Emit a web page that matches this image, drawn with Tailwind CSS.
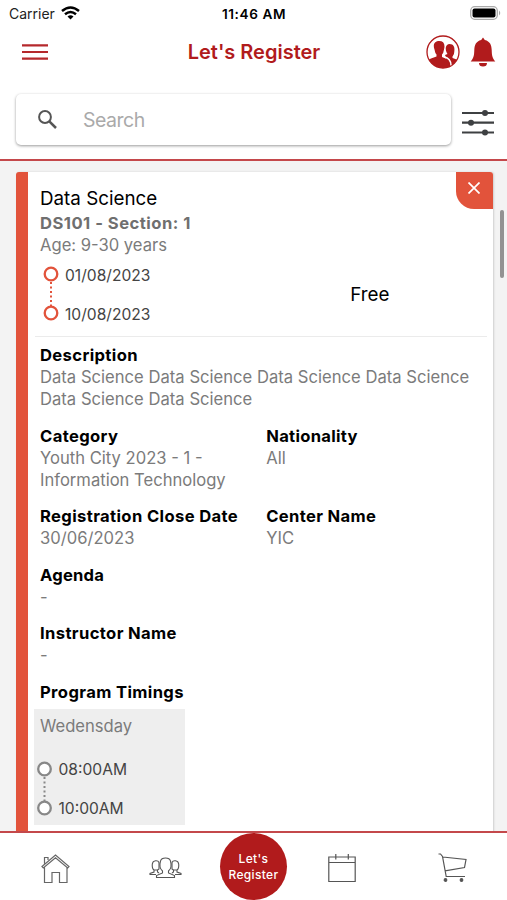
<!DOCTYPE html>
<html lang="en">
<head>
<meta charset="utf-8">
<title>Let's Register</title>
<script src="https://cdn.jsdelivr.net/npm/@tailwindcss/browser@4"></script>
</head>
<body class="w-[507px] h-[900px] overflow-hidden bg-white text-black font-['Inter','Liberation_Sans',sans-serif] text-[16.6px] leading-[22px] flex flex-col">
  <header class="h-[161px] shrink-0 border-b-2 border-[#c4484b] flex flex-col">
    <!-- Status bar -->
    <div class="h-7 grid grid-cols-3 items-center pl-[9px] pr-[6px] text-[14px]">
      <div class="flex items-center gap-[6px]">
        <span class="text-[#222]">Carrier</span>
        <svg width="19" height="14" viewBox="0 0 19 14" fill="none" stroke="#000" stroke-width="2.500" class="-mt-[2px]"><path d="M1 5Q9.500-2 18 5"/><path d="M4 8.300Q9.500 3.800 15 8.300"/><path d="M6.500 10.600Q9.500 8 12.500 10.600L9.500 13.600Z" fill="#000" stroke="none"/></svg>
      </div>
      <div class="text-center font-semibold text-[13.600px] tracking-[0.6px] whitespace-nowrap -ml-[2px]">11:46 AM</div>
      <svg class="justify-self-end -mt-[2px]" width="31" height="14" viewBox="0 0 31 14"><rect x=".7" y=".7" width="26.600" height="12.600" rx="4" fill="#fff" stroke="#aaa" stroke-width="1.300"/><rect x="2.500" y="2.500" width="23" height="9" rx="2" fill="#000"/><path d="M29 4.500Q31.500 7 29 9.500Z" fill="#aaa"/></svg>
    </div>
    <!-- Title bar -->
    <div class="h-[48px] grid grid-cols-[1fr_auto_1fr] items-center pl-[22px] pr-[11px] text-[#b11b1c]">
      <svg width="26" height="16" viewBox="0 0 26 16" stroke="#b5292c" stroke-width="2.200"><path d="M0 1.300H26M0 8H26M0 14.700H26"/></svg>
      <h1 class="text-[20px] font-semibold leading-6 -ml-[10px]">Let's Register</h1>
      <div class="flex items-center justify-self-end gap-[10px]">
        <svg width="34" height="34" viewBox="0 0 34 34"><defs><clipPath id="ring"><circle cx="17" cy="17" r="16"/></clipPath></defs><circle cx="17" cy="17" r="16" fill="#fff" stroke="#b11b1c" stroke-width="1.300"/><g clip-path="url(#ring)" fill="#b11b1c"><path d="M23.500 9C27.800 9 29 12.500 28.300 16.500Q28.500 19.500 26.500 21.500V23L32 25V31L24 33L19 20L21.500 19C18.500 14.500 19.500 9 23.500 9Z"/><path d="M8.500 14.500C6.500 9 9 6 13.200 6C17.500 6 19.500 9 18 14.500Q17.500 18 16 19.500V22L19.500 23.500Q24.500 25 25.500 29V35H0V26L5 23.500L10.500 21.500V19.500Q9 18 8.500 14.500Z"/><path d="M18 21.800Q25 23.500 25 30.500" fill="none" stroke="#fff" stroke-width="1.500"/></g></svg>
        <svg width="26" height="30" viewBox="0 0 26 30" fill="#b11b1c"><path d="M13 .5L14.800 3C20 4.300 21.500 8 21.700 13C21.900 18.500 22.300 21 25.300 24.500H.7C3.700 21 4.100 18.500 4.300 13C4.500 8 6 4.300 11.200 3Z"/><path d="M9 26H17Q17 29.500 13 29.500Q9 29.500 9 26Z"/></svg>
      </div>
    </div>
    <!-- Search -->
    <div class="mt-[18px] pl-[16px] pr-[12px] flex items-center justify-between">
      <div class="w-[435px] h-[51px] rounded-[5px] bg-white shadow-[0_1px_3px_rgba(0,0,0,0.4)] flex items-center pl-[22px]">
        <svg width="19" height="19" viewBox="0 0 19 19" fill="none" stroke="#555"><circle cx="7" cy="7" r="5.900" stroke-width="2"/><path d="M11.300 11.300L18 18" stroke-width="2.500"/></svg>
        <span class="ml-[26px] text-[19.500px] leading-6 text-[#aaa] tracking-[-0.500px]">Search</span>
      </div>
      <svg class="mt-[6px]" width="34" height="26" viewBox="0 0 34 26" stroke="#3e4042" stroke-width="2.200" fill="#3e4042"><path d="M1 3H33M1 12.700H33M1 22.500H33"/><g stroke="none"><circle cx="24" cy="3" r="3"/><circle cx="10" cy="12.700" r="3"/><circle cx="24" cy="22.500" r="3"/></g></svg>
    </div>
  </header>

  <main class="relative h-[670px] shrink-0 bg-[#f3f3f3] pl-[15.500px] pr-[14.500px] pt-[10.500px] overflow-hidden">
    <article class="relative h-[680px] rounded-[3px] border-l-[12px] border-[#e2533b] bg-white shadow-[1px_0_2px_rgba(0,0,0,0.15)] pl-[12.500px] pt-[14.500px] text-[#7b7b7b]">
      <h2 class="text-[18.800px] leading-[26px] text-black">Data Science</h2>
      <p class="font-bold text-[#6f6f6f] tracking-[0.480px]">DS101 - Section: 1</p>
      <p>Age: 9-30 years</p>
      <div class="flex mt-[8px] h-[62px] pl-[3px]">
        <svg width="17" height="57" viewBox="0 0 17 57" fill="none" stroke="#e2533b"><circle cx="8" cy="10" r="6.300" stroke-width="2.300"/><path d="M8 18V42" stroke-width="2" stroke-dasharray="2 2.500"/><circle cx="8" cy="49" r="6.300" stroke-width="2.300"/></svg>
        <div class="ml-[5px] pt-[0.500px] flex flex-col gap-[17px] text-[#444] text-[15.600px]"><span>01/08/2023</span><span>10/08/2023</span></div>
        <div class="ml-auto mr-[103px] mt-[20px] text-[18.800px] text-black">Free</div>
      </div>
      <hr class="-ml-[5px] mr-[6px] mt-[10px] border-[#ebebeb]">
      <section class="mt-[7px]"><h3 class="font-bold text-black tracking-[0.370px]">Description</h3><p class="w-[440px] whitespace-nowrap tracking-[0.020px]">Data Science Data Science Data Science Data Science<br>Data Science Data Science</p></section>
      <div class="grid grid-cols-2 mt-[14.500px]">
        <section><h3 class="font-bold text-black tracking-[0.370px]">Category</h3><p>Youth City 2023 - 1 -<br>Information Technology</p></section>
        <section><h3 class="font-bold text-black tracking-[0.270px]">Nationality</h3><p>All</p></section>
      </div>
      <div class="grid grid-cols-2 mt-[14.500px]">
        <section><h3 class="font-bold text-black tracking-[0.370px] whitespace-nowrap">Registration Close Date</h3><p>30/06/2023</p></section>
        <section><h3 class="font-bold text-black tracking-[0.330px]">Center Name</h3><p>YIC</p></section>
      </div>
      <section class="mt-[14.500px]"><h3 class="font-bold text-black tracking-[0.200px]">Agenda</h3><p>-</p></section>
      <section class="mt-[14.500px]"><h3 class="font-bold text-black tracking-[0.370px]">Instructor Name</h3><p>-</p></section>
      <section class="mt-[14.500px]">
        <h3 class="font-bold text-black tracking-[0.370px]">Program Timings</h3>
        <div class="-ml-[6px] mt-[6px] w-[151px] h-[116px] bg-[#eee] pl-[6px] pt-[6px]">
          <p>Wedensday</p>
          <div class="flex mt-[22px] -ml-[4px]">
            <svg width="17" height="57" viewBox="0 0 17 57" fill="#fff" stroke="#888"><circle cx="8.500" cy="10" r="6.300" stroke-width="2.300"/><path d="M8.500 18V42" stroke-width="2" stroke-dasharray="2 2.500"/><circle cx="8.500" cy="49" r="6.300" stroke-width="2.300"/></svg>
            <div class="ml-[5.500px] pt-[0.500px] flex flex-col gap-[17px] text-[#444] text-[15.600px]"><span>08:00AM</span><span>10:00AM</span></div>
          </div>
        </div>
      </section>
      <button class="absolute right-0 top-0 w-[37px] h-[37px] rounded-bl-[18px] rounded-tr-[3px] bg-[#e2533b] flex items-center justify-center" aria-label="Close"><svg width="12" height="12" viewBox="0 0 12 12" stroke="#fff" stroke-width="1.700" class="-mt-[4px]"><path d="M.5.5L11.500 11.500M11.500.5L.5 11.500"/></svg></button>
    </article>
    <div class="absolute right-[3.500px] top-[49px] w-[4px] h-[68px] rounded-full bg-[#929292]"></div>
  </main>

  <nav class="h-[69px] shrink-0 bg-white border-t-2 border-[#c4484b] flex items-start">
    <svg class="ml-[41px] mt-[21px]" width="29" height="30" viewBox="0 0 29 30" fill="none" stroke="#666" stroke-width="1.200"><path d="M1 12.500L14.500 1L28 12.500L26.700 14L14.500 3.800L2.300 14ZM3.500 9.500V3.500H7V6M3.500 13.500V28.500H11V18.500H18.500V28.500H26V13.500"/></svg>
    <svg class="ml-[79px] mt-[24px]" width="33" height="22" viewBox="0 0 33 22" fill="none" stroke="#555" stroke-width="1.100"><path d="M7.500 20.500V18.500L13.500 16V14C10.500 11.500 10.500 7.500 11.500 4C12.500 0 20.500 0 21.500 4C22.500 7.500 22.500 11.500 19.500 14V16L25.500 18.500V20.500Z"/><path d="M10 5.500C9 3 4 3 3.300 7C3 10 3 11.500 5 13V15L1 16.500V17.500H7M5 13H8.500V15L10 16M10 5.500V12L8.500 13M23 5.500C24 3 29 3 29.700 7C30 10 30 11.500 28 13V15L32 16.500V17.500H26M28 13H24.500V15L23 16M23 5.500V12L24.500 13"/></svg>
    <div class="ml-[38px] w-[67px] h-[67px] rounded-full bg-[#b11b1c] text-white text-[12px] leading-[16px] font-medium tracking-[0.350px] text-center flex items-center justify-center">Let's<br>Register</div>
    <svg class="ml-[41px] mt-[20px]" width="28" height="30" viewBox="0 0 28 30" fill="none" stroke="#555" stroke-width="1.200"><path d="M.8 4H27.200V28.500H.8ZM.8 9.500H27.200M7.800 1V6.500M20.300 1V6.500"/></svg>
    <svg class="ml-[82px] mt-[20px]" width="29" height="30" viewBox="0 0 29 30" fill="none" stroke="#555" stroke-width="1.200"><path d="M.5 1H2.500L4.500 3.500L8.200 23.500H27M4.800 4L28 6.500L26.500 14.500L7 17.800"/><circle cx="7.500" cy="27" r="1.300" fill="#555"/><circle cx="23.500" cy="27" r="1.300" fill="#555"/></svg>
  </nav>
</body>
</html>
